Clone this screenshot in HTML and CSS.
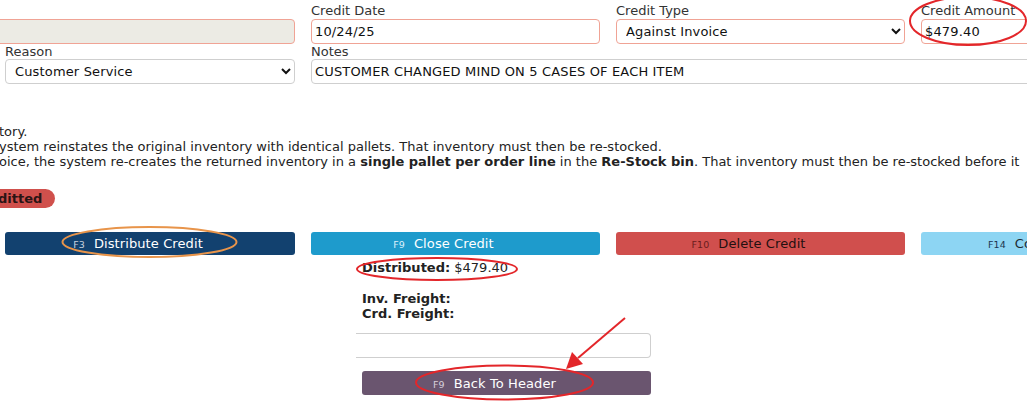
FILE: index.html
```html
<!DOCTYPE html>
<html>
<head>
<meta charset="utf-8">
<link rel="stylesheet" href="styles.css">
</head>
<body>
<div class="page">
  <div class="fields">
    <div class="field">
      <label class="lbl">&nbsp;</label>
      <input class="inp inp-req inp-ro first" type="text" value="">
    </div>
    <div class="field">
      <label class="lbl">Credit Date</label>
      <input class="inp inp-req" type="text" value="10/24/25">
    </div>
    <div class="field">
      <label class="lbl">Credit Type</label>
      <select class="sel sel-req"><option>Against Invoice</option></select>
    </div>
    <div class="field">
      <label class="lbl">Credit Amount</label>
      <input class="inp inp-req" type="text" value="$479.40">
    </div>
    <div class="field">
      <label class="lbl">Reason</label>
      <select class="sel"><option>Customer Service</option></select>
    </div>
    <div class="field span3">
      <label class="lbl">Notes</label>
      <input class="inp" type="text" value="CUSTOMER CHANGED MIND ON 5 CASES OF EACH ITEM">
    </div>
  </div>

  <div class="info">
    <div class="line">tory.</div>
    <div class="line">ystem reinstates the original inventory with identical pallets. That inventory must then be re-stocked.</div>
    <div class="line">oice, the system re-creates the returned inventory in a <b>single pallet per order line</b> in the <b>Re-Stock bin</b>. That inventory must then be re-stocked before it</div>
  </div>

  <div class="status"><span class="badge">ditted</span></div>

  <div class="actions">
    <button class="btn btn-navy"><span class="key">F3</span>Distribute Credit</button>
    <button class="btn btn-blue"><span class="key">F9</span>Close Credit</button>
    <button class="btn btn-red"><span class="key">F10</span>Delete Credit</button>
    <button class="btn btn-light btn-edge"><span class="key">F14</span>Copy Credit</button>
  </div>

  <div class="summary">
    <div class="dist"><b>Distributed:</b> $479.40</div>
    <div class="freight"><b>Inv. Freight:</b></div>
    <div class="freight"><b>Crd. Freight:</b></div>
    <input class="inp summary-inp" type="text" value="">
    <button class="btn btn-purple"><span class="key">F9</span>Back To Header</button>
  </div>

  <svg class="marks" width="1027" height="402" viewBox="0 0 1027 402">
    <ellipse cx="968" cy="21" rx="58" ry="24" fill="none" stroke="#e3262a" stroke-width="2"/>
    <ellipse cx="149.5" cy="242" rx="87" ry="15" fill="none" stroke="#e8944a" stroke-width="2"/>
    <ellipse cx="437" cy="269" rx="80" ry="11" fill="none" stroke="#e3262a" stroke-width="2"/>
    <ellipse cx="504.5" cy="382.5" rx="88.5" ry="17" fill="none" stroke="#e3262a" stroke-width="2"/>
    <line x1="625" y1="318" x2="578" y2="358" stroke="#e3262a" stroke-width="2"/>
    <polygon points="566,369 572,352 583,364" fill="#e3262a"/>
  </svg>
</div>
</body>
</html>
```
FILE: styles.css
```css
html, body {
  margin: 0;
  padding: 0;
  background: #fff;
}
body {
  font-family: "DejaVu Sans", Verdana, sans-serif;
  font-size: 13px;
  color: #222;
  overflow: hidden;
}
.page {
  position: relative;
  width: 1027px;
  height: 402px;
  overflow: hidden;
}
.fields {
  display: grid;
  grid-template-columns: 290px 289px 289px 289px;
  column-gap: 16px;
  padding: 3px 0 0 5px;
}
.field {
  display: flex;
  flex-direction: column;
  min-width: 0;
}
.span3 {
  grid-column: span 3;
}
.lbl {
  display: block;
  line-height: 15px;
  height: 16px;
  color: #333;
  white-space: nowrap;
}
.field:nth-child(n+5) .lbl {
  height: 15px;
}
.inp, .sel {
  box-sizing: border-box;
  height: 25px;
  width: 100%;
  font-family: "DejaVu Sans", Verdana, sans-serif;
  font-size: 13px;
  letter-spacing: 0.15px;
  color: #111;
  border: 1px solid #cfcfcf;
  border-radius: 4px;
  background: #fff;
  margin: 0;
}
.inp {
  padding: 0 3px;
}
.sel {
  padding: 0 5px;
}
.inp-req, .sel-req {
  border-color: #f0a395;
}
.inp-ro {
  background: #ecebe4;
}
.first {
  margin-left: -12px;
  width: calc(100% + 12px);
}
.info {
  margin-top: 40px;
  line-height: 15px;
  white-space: nowrap;
}
.line {
  margin-left: -1px;
}
.info b {
  color: #222;
}
.status {
  margin-top: 20px;
  height: 20px;
}
.badge {
  display: inline-block;
  margin-left: -2px;
  height: 19px;
  line-height: 19px;
  padding: 0 13px 0 0;
  background: #d0504c;
  border-radius: 0 10px 10px 0;
  font-weight: bold;
  color: #2a1414;
}
.actions {
  display: grid;
  grid-template-columns: 290px 289px 289px 289px;
  column-gap: 16px;
  padding-left: 5px;
  margin-top: 23px;
}
.btn {
  box-sizing: border-box;
  height: 23px;
  border: none;
  border-radius: 3px;
  font-family: "DejaVu Sans", Verdana, sans-serif;
  font-size: 13px;
  letter-spacing: 0.1px;
  padding: 0 24px 0 0;
  display: flex;
  align-items: center;
  justify-content: center;
  white-space: nowrap;
}
.btn-edge {
  justify-content: flex-start;
  padding-left: 67px;
}
.key {
  font-size: 9.5px;
  margin-right: 9px;
  position: relative;
  top: 1px;
}
.btn-navy {
  background: #12416f;
  color: #fff;
}
.btn-navy .key { color: #c6d0de; }
.btn-blue {
  background: #1e9bcc;
  color: #fff;
}
.btn-blue .key { color: #dcf0fa; }
.btn-red {
  background: #d04f4d;
  color: #231010;
}
.btn-red .key { color: #6a1c1c; }
.btn-light {
  background: #8dd5f3;
  color: #1c2a33;
}
.btn-light .key { color: #1c3550; }
.summary {
  margin: 5px 0 0 362px;
  width: 289px;
}
.dist {
  line-height: 15px;
  margin-bottom: 16px;
}
.freight {
  line-height: 15px;
}
.summary-inp {
  margin-top: 12px;
  margin-left: -6px;
  width: 295px;
  border-left: none;
  border-radius: 0 4px 4px 0;
}
.btn-purple {
  width: 289px;
  height: 24px;
  margin-top: 13px;
  background: #6a556f;
  color: #fff;
}
.btn-purple .key { color: #d8d0dc; }
.marks {
  position: absolute;
  left: 0;
  top: 0;
  pointer-events: none;
}
```
